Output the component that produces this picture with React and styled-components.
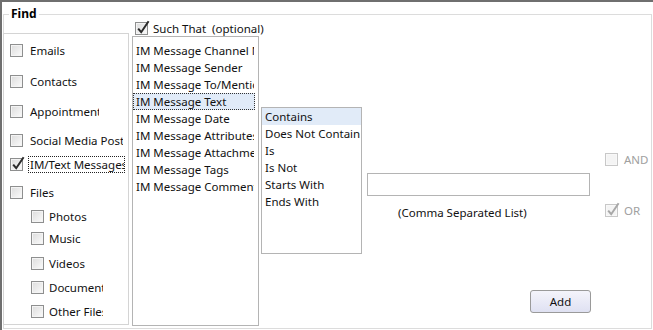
import React from 'react'
import styled, { createGlobalStyle } from 'styled-components'

const Global = createGlobalStyle`
  body {
    margin: 0;
    background: #fff;
    font-family: "Noto Sans", "DejaVu Sans", sans-serif;
    font-size: 11.5px;
    color: #111;
  }
`

const Frame = styled.div`
  width: 653px;
  height: 330px;
  box-sizing: border-box;
  border-top: 2px solid #6f6f6f;
  border-left: 2px solid #6f6f6f;
  padding: 5px 0 0 1px;
  background: #fff;
  overflow: hidden;
`

const Group = styled.fieldset`
  margin: 0;
  padding: 0;
  min-width: 0;
  width: 649px;
  height: 322px;
  box-sizing: border-box;
  border: 1px solid #dcdcdc;
`

const Legend = styled.legend`
  margin-left: 5px;
  padding: 0 2px;
  font-weight: bold;
  font-size: 12px;
  line-height: 14px;
  color: #000;
`

const Row = styled.div`
  display: flex;
  align-items: flex-start;
`

const CategoryPanel = styled.div`
  margin: 12px 0 0 -1px;
  width: 126px;
  height: 292px;
  box-sizing: border-box;
  border: 1px solid #d4d4d4;
  display: flex;
  flex-direction: column;
`

const Option = styled.label`
  display: flex;
  align-items: center;
  height: 16px;
  margin-top: ${p => p.$top}px;
  padding-left: ${p => (p.$sub ? 27 : 6)}px;
  color: ${p => (p.$disabled ? '#a0a0a0' : '#111')};
`

const Label = styled.span`
  flex: none;
  margin-left: ${p => p.$gap || 5}px;
  width: ${p => (p.$clip ? p.$clip + 'px' : 'auto')};
  overflow: hidden;
  white-space: nowrap;
  line-height: 15px;
  padding: 0 1px;
  border: 1px dotted ${p => (p.$focus ? '#222' : 'transparent')};
`

const Box = styled.span`
  position: relative;
  flex: none;
  width: 13px;
  height: 13px;
  box-sizing: border-box;
  border: 1px solid ${p => (p.$disabled ? '#c8c8c8' : '#8e8f8f')};
  background: ${p => (p.$disabled ? '#f4f4f4' : 'linear-gradient(135deg, #dcdcdc, #fbfbfb)')};
  box-shadow: inset 0 0 0 1px ${p => (p.$disabled ? '#f8f8f8' : '#f4f4f4')};
`

const Tick = styled.svg`
  position: absolute;
  left: 1px;
  top: -3px;
  overflow: visible;
`

const Middle = styled.div`
  margin-left: 3px;
  width: 127px;
  display: flex;
  flex-direction: column;
`

const SuchThat = styled.label`
  display: flex;
  align-items: center;
  height: 15px;
  padding-left: 3px;
  white-space: nowrap;
`

const ListBox = styled.div`
  width: ${p => p.$w}px;
  height: ${p => p.$h}px;
  margin-top: ${p => p.$top || 0}px;
  margin-left: ${p => p.$left || 0}px;
  box-sizing: border-box;
  border: 1px solid #b4b4b4;
  padding: ${p => p.$pad || '0'};
  background: #fff;
  overflow: hidden;
`

const Item = styled.div`
  height: 17px;
  line-height: 15px;
  box-sizing: border-box;
  padding-left: 2px;
  white-space: nowrap;
  overflow: hidden;
  background: ${p => (p.$selected ? '#e1ebf8' : 'transparent')};
  border: 1px dotted ${p => (p.$focus ? '#333' : 'transparent')};
`

const ValueColumn = styled.div`
  margin-left: 5px;
  width: 223px;
  display: flex;
  flex-direction: column;
`

const TextBox = styled.input`
  margin: 152px 0 0 0;
  width: 223px;
  height: 23px;
  box-sizing: border-box;
  border: 1px solid #b4b4b4;
  padding: 0 3px;
  font: inherit;
  outline: none;
`

const Caption = styled.div`
  margin-top: 9px;
  padding-left: 31px;
  line-height: 16px;
`

const Button = styled.button`
  align-self: flex-end;
  margin: 69px -1px 0 0;
  width: 61px;
  height: 23px;
  border: 1px solid #9a9a9a;
  border-radius: 3px;
  background: linear-gradient(#f4f4fb, #dfe1f2);
  font: inherit;
  color: #111;
  padding: 0;
`

const Logic = styled.div`
  margin-left: 15px;
  display: flex;
  flex-direction: column;
`

const LogicOption = styled(Option)`
  padding-left: 0;
  height: 14px;
`

function Check({ checked, disabled }) {
  return (
    <Box $disabled={disabled}>
      {checked && (
        <Tick width="13" height="15" viewBox="0 0 13 15">
          <path
            d="M1.2 8.6 L4.2 12.2 L11.6 1.2"
            fill="none"
            stroke={disabled ? '#a8a8a8' : '#2b2b2b'}
            strokeWidth="2"
          />
        </Tick>
      )}
    </Box>
  )
}

const categories = [
  { text: 'Emails', top: 8 },
  { text: 'Contacts', top: 15 },
  { text: 'Appointments', top: 14, clip: 68 },
  { text: 'Social Media Posts', top: 13, clip: 92 },
  { text: 'IM/Text Messages', top: 8, clip: 93, checked: true, focus: true },
  { text: 'Files', top: 12 },
  { text: 'Photos', top: 8, sub: true },
  { text: 'Music', top: 6, sub: true },
  { text: 'Videos', top: 9, sub: true },
  { text: 'Documents', top: 8, sub: true, clip: 53 },
  { text: 'Other Files', top: 8, sub: true, clip: 53 },
]

const fields = [
  'IM Message Channel Name',
  'IM Message Sender',
  'IM Message To/Mentions',
  'IM Message Text',
  'IM Message Date',
  'IM Message Attributes',
  'IM Message Attachments',
  'IM Message Tags',
  'IM Message Comments',
]

const operators = ['Contains', 'Does Not Contain', 'Is', 'Is Not', 'Starts With', 'Ends With']

export default function App() {
  return (
    <Frame>
      <Global />
      <Group>
        <Legend>Find</Legend>
        <Row>
          <CategoryPanel>
            {categories.map(c => (
              <Option key={c.text} $top={c.top} $sub={c.sub}>
                <Check checked={c.checked} />
                <Label $clip={c.clip} $focus={c.focus} $gap={c.sub ? 3 : 5}>
                  {c.text}
                </Label>
              </Option>
            ))}
          </CategoryPanel>

          <Middle>
            <SuchThat>
              <Check checked />
              <Label $gap={3}>Such That&nbsp; (optional)</Label>
            </SuchThat>
            <ListBox $w={127} $h={290} $pad="5px 3px 0 0">
              {fields.map(f => (
                <Item key={f} $selected={f === 'IM Message Text'} $focus={f === 'IM Message Text'}>
                  {f}
                </Item>
              ))}
            </ListBox>
          </Middle>

          <ListBox $w={101} $h={147} $top={86} $left={2}>
            {operators.map(o => (
              <Item key={o} $selected={o === 'Contains'}>
                {o}
              </Item>
            ))}
          </ListBox>

          <ValueColumn>
            <TextBox type="text" />
            <Caption>(Comma Separated List)</Caption>
            <Button>Add</Button>
          </ValueColumn>

          <Logic>
            <LogicOption $top={131} $disabled>
              <Check disabled />
              <Label $gap={4}>AND</Label>
            </LogicOption>
            <LogicOption $top={37} $disabled>
              <Check checked disabled />
              <Label $gap={4}>OR</Label>
            </LogicOption>
          </Logic>
        </Row>
      </Group>
    </Frame>
  )
}
